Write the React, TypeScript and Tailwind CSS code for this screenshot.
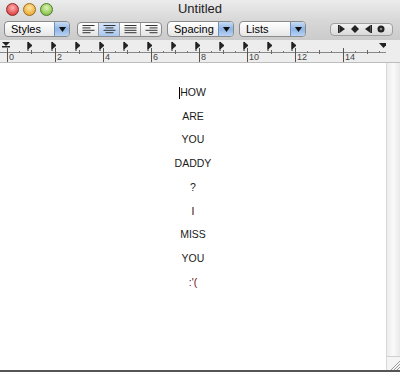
import React from "react";

const font = { fontFamily: '"Liberation Sans", Arial, sans-serif' };

function Light({ from, to, border }: { from: string; to: string; border: string }) {
  return (
    <div
      className="w-[13px] h-[13px] rounded-full"
      style={{ background: `radial-gradient(circle at 50% 35%, ${from}, ${to})`, border: `1px solid ${border}` }}
    />
  );
}

function Dropdown({ label, width }: { label: string; width: number }) {
  return (
    <div
      className="h-[16px] flex rounded-[4px] border border-[#8a8a8a] overflow-hidden bg-gradient-to-b from-white to-[#e6e6e6]"
      style={{ width }}
    >
      <div className="flex-1 text-[11px] leading-[14px] pl-[6px] text-black">{label}</div>
      <div className="w-[15px] border-l border-[#6f8fb8] bg-gradient-to-b from-[#c9dcf5] via-[#8fb5e6] to-[#b8d3f4] flex items-center justify-center">
        <svg width="7" height="5" viewBox="0 0 7 5">
          <path d="M0 0 H7 L3.5 5 Z" fill="#111" />
        </svg>
      </div>
    </div>
  );
}

function AlignIcon({ kind }: { kind: "left" | "center" | "justify" | "right" }) {
  const rows = [0, 1, 2, 3];
  const lens = { left: [12, 8, 12, 8], center: [12, 8, 12, 8], justify: [12, 12, 12, 12], right: [12, 8, 12, 8] }[kind];
  return (
    <svg width="13" height="9" viewBox="0 0 13 9">
      {rows.map((r) => {
        const l = lens[r];
        const x = kind === "left" || kind === "justify" ? 0.5 : kind === "center" ? 0.5 + (12 - l) / 2 : 12.5 - l;
        return <rect key={r} x={x} y={r * 2.4} width={l} height="1" fill="#333" />;
      })}
    </svg>
  );
}

function Ruler() {
  const ticks: React.ReactNode[] = [];
  for (let i = 0; i <= 64; i++) {
    const x = 7 + i * 6;
    if (x > 383) break;
    if (i % 8 === 0) {
      ticks.push(<line key={"m" + i} x1={x + 0.5} y1={8} x2={x + 0.5} y2={22} stroke="#555" strokeWidth="1" />);
      ticks.push(
        <text key={"t" + i} x={x + 2} y={20} fontSize="9" fill="#444" style={font}>
          {i / 4}
        </text>
      );
    } else if (i % 4 === 0) {
      ticks.push(<line key={"h" + i} x1={x + 0.5} y1={10} x2={x + 0.5} y2={14} stroke="#666" />);
    } else if (i % 2 === 0) {
      ticks.push(<line key={"q" + i} x1={x + 0.5} y1={11} x2={x + 0.5} y2={13} stroke="#777" />);
    }
  }
  const tabs: React.ReactNode[] = [];
  for (let x = 28; x <= 292; x += 24) {
    tabs.push(<path key={"tab" + x} d={`M${x} 2 V11 M${x} 2 L${x + 4} 5.5 L${x} 9 Z`} fill="#222" stroke="#222" strokeWidth="1" />);
  }
  return (
    <svg width="386" height="23" viewBox="0 0 386 23" className="block">
      <line x1="0" y1="12.5" x2="386" y2="12.5" stroke="#888" />
      {ticks}
      {tabs}
      <path d="M2 2 H10 L6 6 Z" fill="#222" />
      <rect x="2" y="6" width="8" height="1.5" fill="#222" />
      <path d="M379 3 H388 L383.5 8 Z" fill="#222" />
    </svg>
  );
}

export default function App() {
  const words: [string, string][] = [
    ["HOW", "#1a1a1a"],
    ["ARE", "#1a1a1a"],
    ["YOU", "#1a1a1a"],
    ["DADDY", "#1a1a1a"],
    ["?", "#1a1a1a"],
    ["I", "#3a0c0c"],
    ["MISS", "#1a1a1a"],
    ["YOU", "#1a1a1a"],
    [":'(", "#6a1010"],
  ];
  return (
    <div className="w-[400px] h-[372px] flex flex-col overflow-hidden bg-white" style={font}>
      <div className="bg-gradient-to-b from-[#ececec] via-[#d8d8d8] to-[#cbcbcb]">
        <div className="h-[18px] relative flex items-center pl-[6px] gap-[4px]">
          <Light from="#ffb3b3" to="#d42020" border="#8c2a2a" />
          <Light from="#ffe6a6" to="#e39a12" border="#9a6a1a" />
          <Light from="#dff5b5" to="#6bb22a" border="#4f7a2a" />
          <div className="absolute inset-0 flex items-center justify-center text-[13px] text-[#222]">Untitled</div>
        </div>
        <div className="h-[22px] flex items-center pl-[4px]">
          <Dropdown label="Styles" width={66} />
          <div className="ml-[7px] h-[15px] w-[85px] flex rounded-[4px] border border-[#8a8a8a] overflow-hidden bg-gradient-to-b from-white to-[#e3e3e3]">
            <div className="flex-1 flex items-center justify-center"><AlignIcon kind="left" /></div>
            <div className="flex-1 flex items-center justify-center border-l border-[#9a9a9a] bg-gradient-to-b from-[#d6e6fa] to-[#a9c8ef]"><AlignIcon kind="center" /></div>
            <div className="flex-1 flex items-center justify-center border-l border-[#9a9a9a]"><AlignIcon kind="justify" /></div>
            <div className="flex-1 flex items-center justify-center border-l border-[#9a9a9a]"><AlignIcon kind="right" /></div>
          </div>
          <div className="ml-[5px]"><Dropdown label="Spacing" width={67} /></div>
          <div className="ml-[5px]"><Dropdown label="Lists" width={67} /></div>
          <div className="ml-[24px] h-[13px] w-[63px] rounded-[4px] border border-[#a0a0a0] bg-gradient-to-b from-[#f2f2f2] to-[#d9d9d9] flex items-center justify-around px-[4px]">
            <svg width="8" height="8" viewBox="0 0 8 8"><rect x="0" y="0" width="1.5" height="8" fill="#222" /><path d="M1.5 0 L7 4 L1.5 8 Z" fill="#222" /></svg>
            <svg width="8" height="8" viewBox="0 0 8 8"><path d="M4 0 L8 4 L4 8 L0 4 Z" fill="#222" /></svg>
            <svg width="8" height="8" viewBox="0 0 8 8"><rect x="6.5" y="0" width="1.5" height="8" fill="#222" /><path d="M6.5 0 L1 4 L6.5 8 Z" fill="#222" /></svg>
            <svg width="8" height="8" viewBox="0 0 8 8"><circle cx="4" cy="4" r="3.5" fill="#222" /><circle cx="4" cy="4" r="1.3" fill="#888" /></svg>
          </div>
        </div>
      </div>
      <div className="h-[23px] bg-[#ededed] border-b border-[#bdbdbd] flex">
        <Ruler />
      </div>
      <div className="flex-1 flex min-h-0">
        <div className="flex-1 flex flex-col items-center pt-[18px] text-[10.5px] leading-[23.7px]">
          {words.map(([w, c], i) => (
            <div key={i} className="relative" style={{ color: c }}>
              {i === 0 && <span className="absolute left-[-1px] top-[6px] w-px h-[12px] bg-black" />}
              {w}
            </div>
          ))}
        </div>
        <div className="w-[14px] flex flex-col border-l border-[#d8d8d8] bg-gradient-to-r from-[#ececec] via-[#fafafa] to-[#e8e8e8]">
          <div className="flex-1" />
          <div className="h-[14px] bg-[#f4f4f4] border-t border-[#d0d0d0] relative">
            <svg width="14" height="14" viewBox="0 0 14 14" className="absolute inset-0">
              <line x1="4" y1="13" x2="13" y2="4" stroke="#999" />
              <line x1="7" y1="13" x2="13" y2="7" stroke="#999" />
              <line x1="10" y1="13" x2="13" y2="10" stroke="#999" />
            </svg>
          </div>
        </div>
      </div>
      <div className="h-[2px] bg-[#555]" />
    </div>
  );
}
